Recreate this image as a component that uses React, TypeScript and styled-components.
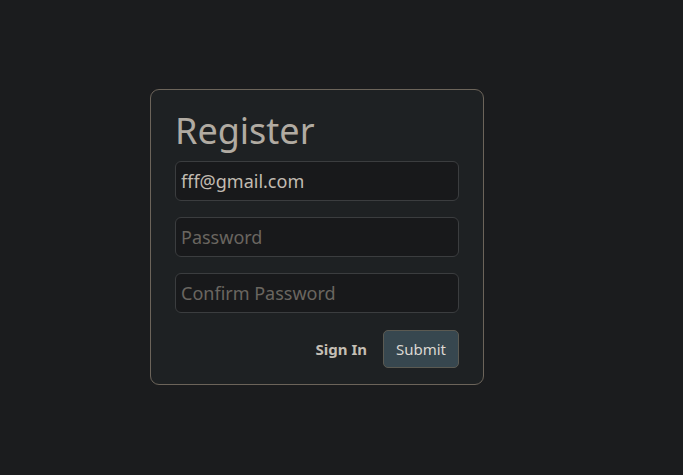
import React from "react";
import styled, { createGlobalStyle } from "styled-components";

const Global = createGlobalStyle`
  html, body { margin: 0; padding: 0; background: #1b1c1e; }
  body { font-family: "Noto Sans", "Open Sans", sans-serif; }
  * { box-sizing: border-box; }
`;

const Page = styled.div`
  min-height: 475px;
  padding: 89px 0 0 150px;
`;

const Card = styled.form`
  width: 334px;
  background: #1e2123;
  border: 1px solid #6c645a;
  border-radius: 9px;
  padding: 19px 24px 16px;
  display: flex;
  flex-direction: column;
`;

const Title = styled.h1`
  margin: 0 0 8px 0;
  font-weight: 400;
  font-size: 36px;
  line-height: 44px;
  color: #b1aba2;
`;

const Fields = styled.div`
  display: flex;
  flex-direction: column;
  gap: 16px;
`;

const Input = styled.input`
  height: 40px;
  width: 100%;
  background: #18191b;
  border: 1px solid #3b3d3f;
  border-radius: 6px;
  padding: 0 5px;
  font-family: inherit;
  font-size: 18px;
  color: #c2bcb2;
  outline: none;
  &::placeholder { color: #6a6660; }
`;

const Actions = styled.div`
  margin-top: 17px;
  display: flex;
  justify-content: flex-end;
  align-items: center;
  gap: 16px;
`;

const LinkButton = styled.a`
  font-size: 15px;
  font-weight: 700;
  color: #c4beb4;
  text-decoration: none;
  cursor: pointer;
`;

const Submit = styled.button`
  height: 38px;
  width: 76px;
  background: #37474f;
  border: 1px solid #5b5a52;
  border-radius: 5px;
  color: #dcd8d2;
  font-family: inherit;
  font-size: 15px;
  cursor: pointer;
`;

export default function App() {
  return (
    <>
      <Global />
      <Page>
        <Card onSubmit={(e) => e.preventDefault()}>
          <Title>Register</Title>
          <Fields>
            <Input type="email" defaultValue="fff@gmail.com" />
            <Input type="password" placeholder="Password" />
            <Input type="password" placeholder="Confirm Password" />
          </Fields>
          <Actions>
            <LinkButton>Sign In</LinkButton>
            <Submit type="submit">Submit</Submit>
          </Actions>
        </Card>
      </Page>
    </>
  );
}
